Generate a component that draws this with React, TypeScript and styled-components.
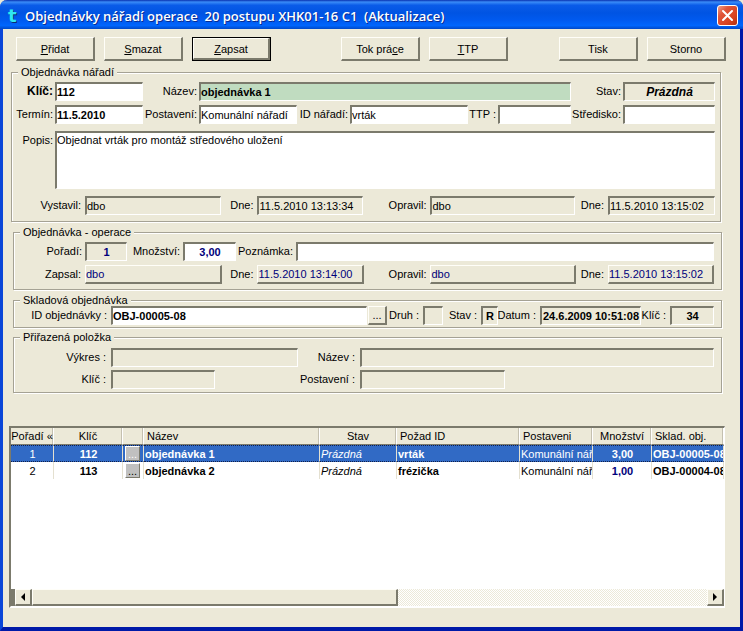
import React, { useId } from "react";
import styled, { createGlobalStyle, css } from "styled-components";

const face = "#ece9d8";
const shade = "#7b7a6c";
const navy = "#00007b";

const GlobalStyle = createGlobalStyle`
  *, *::before, *::after { box-sizing: border-box; }
  body { margin: 0; background: ${face}; }
  body, button, input, textarea, table {
    font-family: "Liberation Sans", Arial, sans-serif;
    font-size: 11px;
    line-height: 14px;
    color: #000;
  }
`;

const sunken = css`
  border: solid;
  border-width: 2px 1px 1px 2px;
  border-color: ${shade} #fff #fff ${shade};
`;

const raised = css`
  border: solid;
  border-width: 1px 2px 2px 1px;
  border-color: #fffef8 ${shade} ${shade} #fffef8;
`;

const WindowFrame = styled.div`
  display: flex;
  flex-direction: column;
  min-height: 100vh;
  background: ${face};
  border: solid;
  border-width: 0 3px 4px;
  border-color: #0a2fc0 #0019a8 #0019a8 #0a46d8;
  border-radius: 7px 7px 0 0;
`;

const TitleBar = styled.header`
  display: flex;
  align-items: center;
  gap: 8px;
  height: 29px;
  margin: 0 -3px;
  padding: 2px 5px 0 8px;
  border-radius: 7px 7px 0 0;
  background: linear-gradient(
    #0831b0 0%, #3a8cf8 7%, #0a5be8 18%, #0054e3 45%, #005af0 70%, #0066fd 88%, #0048c8 100%
  );
`;

const Logo = styled.span`
  width: 9px;
  font: bold 18px/20px "DejaVu Sans", sans-serif;
  color: #2fe6f2;
  text-shadow: 1px 1px 0 #0a2c70;
`;

const Title = styled.h1`
  flex: 1;
  margin: 0;
  font: 600 13px/20px "Open Sans", "Noto Sans", sans-serif;
  color: #fff;
  text-shadow: 1px 1px 0 #0a2c90;
  white-space: pre;
  overflow: hidden;
`;

const CloseButton = styled.button`
  display: grid;
  place-items: center;
  width: 21px;
  height: 21px;
  padding: 0;
  border: 1px solid #fff;
  border-radius: 3px;
  background: linear-gradient(135deg, #f0a088 0%, #e0553a 30%, #d9421f 70%, #b03010 100%);
`;

const Toolbar = styled.div`
  display: flex;
  gap: 9px;
  padding: 8px 14px 0 13px;
`;

const Spacer = styled.span<{ $grow: number }>`
  flex: ${(p) => p.$grow} 1 0;
`;

const CommandButton = styled.button<{ $current?: boolean }>`
  flex: 0 0 79px;
  height: 24px;
  padding: 0;
  background: ${face};
  ${raised}
  ${(p) => p.$current && "outline: 1px solid #000; outline-offset: -1px; border-width: 2px 3px 3px 2px;"}
`;

const Groups = styled.main`
  display: flex;
  flex-direction: column;
  padding: 5px 18px 0 8px;
`;

const Group = styled.fieldset<{ $top?: number; $first?: boolean; $bottom: number; $above?: number }>`
  display: flex;
  flex-direction: column;
  min-width: 0;
  margin: ${(p) => p.$above ?? 0}px ${(p) => (p.$first ? 1 : 0)}px 0 ${(p) => (p.$first ? 0 : 2)}px;
  padding: ${(p) => p.$top ?? 0}px ${(p) => (p.$first ? 5 : 7)}px ${(p) => p.$bottom}px 0;
  border: 1px solid #a5a294;
  box-shadow: 1px 1px 0 #fff, inset 1px 1px 0 #fff;
`;

const Legend = styled.legend`
  margin-left: 6px;
  padding: 0 3px;
  line-height: 12px;
  background: ${face};
`;

const Row = styled.div<{ $cols: string; $gap?: number; $above?: number; $height?: number }>`
  display: grid;
  grid-template-columns: ${(p) => p.$cols};
  grid-template-rows: ${(p) => p.$height ?? 19}px;
  margin-top: ${(p) => p.$above ?? 0}px;
  padding-left: 1px;

  label {
    padding: 2px ${(p) => p.$gap ?? 2}px 0 0;
    text-align: right;
    white-space: nowrap;
    justify-self: end;
  }
`;

type Tone = "edit" | "locked" | "key" | "raised";

const TextBox = styled.input<{ $tone: Tone; $bold?: boolean; $navy?: boolean; $italic?: boolean; $center?: boolean }>`
  width: 100%;
  min-width: 0;
  padding: 0;
  border-radius: 0;
  outline: none;
  background: ${(p) => (p.$tone === "edit" ? "#fff" : p.$tone === "key" ? "#c0dcc0" : face)};
  font-size: ${(p) => (p.$italic ? 12 : 11)}px;
  font-weight: ${(p) => (p.$bold ? "bold" : "normal")};
  font-style: ${(p) => (p.$italic ? "italic" : "normal")};
  color: ${(p) => (p.$navy ? navy : "#000")};
  text-align: ${(p) => (p.$center ? "center" : "left")};
  ${(p) => (p.$tone === "raised" ? raised : sunken)}
`;

const Memo = styled.textarea`
  width: 100%;
  min-width: 0;
  padding: 0;
  outline: none;
  resize: none;
  background: #fff;
  ${sunken}
`;

const StrongLabel = styled.label`
  font-size: 12px;
  font-weight: bold;
`;

const BrowseButton = styled.button`
  margin-left: 1px;
  padding: 0;
  background: ${face};
  ${raised}
`;

const GridPanel = styled.section`
  display: flex;
  flex: 1;
  flex-direction: column;
  margin: 33px 15px 19px 6px;
  min-height: 120px;
  background: #fff;
  border: solid;
  border-width: 2px 1px 2px 2px;
  border-color: ${shade} #fff #fff ${shade};
  overflow: hidden;
`;

const Table = styled.table`
  width: 100%;
  table-layout: fixed;
  border-collapse: separate;
  border-spacing: 0;
`;

const HeadCell = styled.th<{ $center?: boolean }>`
  height: 17px;
  padding: 0 0 0 ${(p) => (p.$center ? 0 : 3)}px;
  overflow: hidden;
  background: ${face};
  border-right: 1px solid #fff;
  border-bottom: 1px solid ${shade};
  box-shadow: inset -1px 0 0 #c4c0b0;
  font-weight: normal;
  text-align: ${(p) => (p.$center ? "center" : "left")};
  white-space: nowrap;
`;

const BodyRow = styled.tr<{ $selected?: boolean }>`
  color: #000;
  ${(p) =>
    p.$selected &&
    css`
      color: #fff;
      background: #316ac5;
      td {
        border-top: 1px dotted #10204a;
        border-bottom: 1px dotted #10204a;
      }
    `}
`;

const Cell = styled.td<{ $center?: boolean; $bold?: boolean; $italic?: boolean; $navy?: boolean }>`
  height: 17px;
  padding: 0 0 0 1px;
  overflow: hidden;
  border-right: 1px solid #e4e0d0;
  font-weight: ${(p) => (p.$bold ? "bold" : "normal")};
  font-style: ${(p) => (p.$italic ? "italic" : "normal")};
  color: ${(p) => (p.$navy ? navy : "inherit")};
  text-align: ${(p) => (p.$center ? "center" : "left")};
  white-space: nowrap;
`;

const CellButton = styled.button<{ $selected?: boolean }>`
  display: block;
  width: 15px;
  height: 15px;
  margin-left: 1px;
  padding: 0;
  background: #c0c0c0;
  border: 1px solid;
  border-color: #fff ${shade} ${shade} #fff;
  line-height: 12px;
  color: ${(p) => (p.$selected ? "#fff" : "#000")};
`;

const ScrollBar = styled.div`
  display: flex;
  height: 17px;
  margin-top: auto;
  border-left: 4px solid ${shade};
  background: repeating-conic-gradient(#fff 0 25%, ${face} 0 50%) 0 0 / 2px 2px;
`;

const ScrollArrow = styled.button`
  display: grid;
  place-items: center;
  flex: 0 0 17px;
  padding: 0;
  background: ${face};
  ${raised}
`;

const ScrollThumb = styled.div`
  flex: 365 1 0;
  background: ${face};
  ${raised}
`;

const ScrollTrack = styled.div`
  flex: 310 1 0;
`;

type FieldProps = {
  label: string;
  value?: string;
  tone?: Tone;
  bold?: boolean;
  navy?: boolean;
  italic?: boolean;
  center?: boolean;
  strong?: boolean;
};

function Field({ label, value = "", tone = "edit", bold, navy: blue, italic, center, strong }: FieldProps) {
  const id = useId();
  const Tag = strong ? StrongLabel : "label";
  return (
    <>
      <Tag htmlFor={id}>{label}</Tag>
      <TextBox
        id={id}
        defaultValue={value}
        readOnly={tone !== "edit"}
        $tone={tone}
        $bold={bold}
        $navy={blue}
        $italic={italic}
        $center={center}
      />
    </>
  );
}

const orders = [
  { no: "1", key: "112", name: "objednávka 1", state: "Prázdná", item: "vrták", place: "Komunální nářadí", qty: "3,00", stock: "OBJ-00005-08" },
  { no: "2", key: "113", name: "objednávka 2", state: "Prázdná", item: "frézička", place: "Komunální nářadí", qty: "1,00", stock: "OBJ-00004-08" },
];

const columnWidths = [43, 69, 21, undefined, 77, 123, 73, 59, 72];

export default function App() {
  return (
    <>
      <GlobalStyle />
      <WindowFrame>
        <TitleBar>
          <Logo aria-hidden="true">t</Logo>
          <Title>{"Objednávky nářadí operace  20 postupu XHK01-16 C1  (Aktualizace)"}</Title>
          <CloseButton type="button" aria-label="Zavřít">
            <svg width="13" height="13" viewBox="0 0 13 13">
              <path d="M2 2 L11 11 M11 2 L2 11" stroke="#fff" strokeWidth="2" strokeLinecap="round" />
            </svg>
          </CloseButton>
        </TitleBar>

        <Toolbar>
          <CommandButton type="button"><u>P</u>řidat</CommandButton>
          <CommandButton type="button"><u>S</u>mazat</CommandButton>
          <CommandButton type="button" $current><u>Z</u>apsat</CommandButton>
          <Spacer $grow={52} />
          <CommandButton type="button">Tok prá<u>c</u>e</CommandButton>
          <CommandButton type="button"><u>T</u>TP</CommandButton>
          <Spacer $grow={33} />
          <CommandButton type="button">Tisk</CommandButton>
          <CommandButton type="button">Storno</CommandButton>
        </Toolbar>

        <Groups>
          <Group $first $top={4} $bottom={6}>
            <Legend>Objednávka nářadí</Legend>
            <Row $cols="42px 88px 56px 1fr 52px 92px">
              <Field label="Klíč:" value="112" bold strong />
              <Field label="Název:" value="objednávka 1" tone="key" bold />
              <Field label="Stav:" value="Prázdná" tone="locked" bold italic center />
            </Row>
            <Row $cols="42px 88px 56px 98px 53px 1fr 30px 73px 52px 92px" $above={4}>
              <Field label="Termín:" value="11.5.2010" bold />
              <Field label="Postavení:" value="Komunální nářadí" />
              <Field label="ID nářadí:" value="vrták" />
              <Field label="TTP :" />
              <Field label="Středisko:" />
            </Row>
            <Row $cols="42px 1fr" $above={7} $height={58}>
              <label htmlFor="popis">Popis:</label>
              <Memo id="popis" defaultValue="Objednat vrták pro montáž středového uložení" />
            </Row>
            <Row $cols="72px 136fr 36px 106px 67px 144fr 33px 107px" $gap={4} $above={7}>
              <Field label="Vystavil:" value="dbo" tone="locked" />
              <Field label="Dne:" value="11.5.2010 13:13:34" tone="locked" />
              <Field label="Opravil:" value="dbo" tone="locked" />
              <Field label="Dne:" value="11.5.2010 13:15:02" tone="locked" />
            </Row>
          </Group>

          <Group $top={4} $bottom={5} $above={4}>
            <Legend>Objednávka - operace</Legend>
            <Row $cols="70px 42px 56px 53px 60px 1fr" $gap={3}>
              <Field label="Pořadí:" value="1" tone="locked" bold navy center />
              <Field label="Množství:" value="3,00" bold navy center />
              <Field label="Poznámka:" />
            </Row>
            <Row $cols="70px 137fr 35px 107px 66px 145fr 32px 106px" $gap={4} $above={4}>
              <Field label="Zapsal:" value="dbo" tone="raised" navy />
              <Field label="Dne:" value="11.5.2010 13:14:00" tone="raised" navy />
              <Field label="Opravil:" value="dbo" tone="raised" navy />
              <Field label="Dne:" value="11.5.2010 13:15:02" tone="raised" navy />
            </Row>
          </Group>

          <Group $bottom={2} $above={4}>
            <Legend>Skladová objednávka</Legend>
            <Row $cols="96px 1fr 20px 36px 20px 38px 17px 42px 101px 29px 44px" $gap={4}>
              <Field label="ID objednávky :" value="OBJ-00005-08" bold />
              <BrowseButton type="button" aria-label="Vybrat objednávku">...</BrowseButton>
              <Field label="Druh :" tone="locked" />
              <Field label="Stav :" value="R" tone="locked" bold center />
              <Field label="Datum :" value="24.6.2009 10:51:08" tone="locked" bold center />
              <Field label="Klíč :" value="34" tone="locked" bold center />
            </Row>
          </Group>

          <Group $top={5} $bottom={3} $above={3}>
            <Legend>Přiřazená položka</Legend>
            <Row $cols="96px 187px 62px 1fr" $gap={5}>
              <Field label="Výkres :" tone="locked" />
              <Field label="Název :" tone="locked" />
            </Row>
            <Row $cols="96px 104px 145px 145px" $gap={5} $above={3}>
              <Field label="Klíč :" tone="locked" />
              <Field label="Postavení :" tone="locked" />
            </Row>
          </Group>
        </Groups>

        <GridPanel>
          <Table>
            <colgroup>
              {columnWidths.map((w, i) => (
                <col key={i} width={w} />
              ))}
            </colgroup>
            <thead>
              <tr>
                <HeadCell $center>Pořadí «</HeadCell>
                <HeadCell $center>Klíč</HeadCell>
                <HeadCell aria-label="Detail" />
                <HeadCell>Název</HeadCell>
                <HeadCell $center>Stav</HeadCell>
                <HeadCell>Požad ID</HeadCell>
                <HeadCell>Postaveni</HeadCell>
                <HeadCell $center>Množství</HeadCell>
                <HeadCell>Sklad. obj.</HeadCell>
              </tr>
            </thead>
            <tbody>
              {orders.map((o, i) => (
                <BodyRow key={o.key} $selected={i === 0}>
                  <Cell $center>{o.no}</Cell>
                  <Cell $center $bold>{o.key}</Cell>
                  <Cell>
                    <CellButton type="button" $selected={i === 0} aria-label={`Detail ${o.key}`}>...</CellButton>
                  </Cell>
                  <Cell $bold>{o.name}</Cell>
                  <Cell $italic>{o.state}</Cell>
                  <Cell $bold>{o.item}</Cell>
                  <Cell>{o.place}</Cell>
                  <Cell $center $bold $navy={i !== 0}>{o.qty}</Cell>
                  <Cell $bold>{o.stock}</Cell>
                </BodyRow>
              ))}
            </tbody>
          </Table>
          <ScrollBar>
            <ScrollArrow type="button" aria-label="Posunout doleva">
              <svg width="8" height="8" viewBox="0 0 8 8"><path d="M6 0 L2 4 L6 8 Z" fill="#000" /></svg>
            </ScrollArrow>
            <ScrollThumb />
            <ScrollTrack />
            <ScrollArrow type="button" aria-label="Posunout doprava">
              <svg width="8" height="8" viewBox="0 0 8 8"><path d="M2 0 L6 4 L2 8 Z" fill="#000" /></svg>
            </ScrollArrow>
          </ScrollBar>
        </GridPanel>
      </WindowFrame>
    </>
  );
}
